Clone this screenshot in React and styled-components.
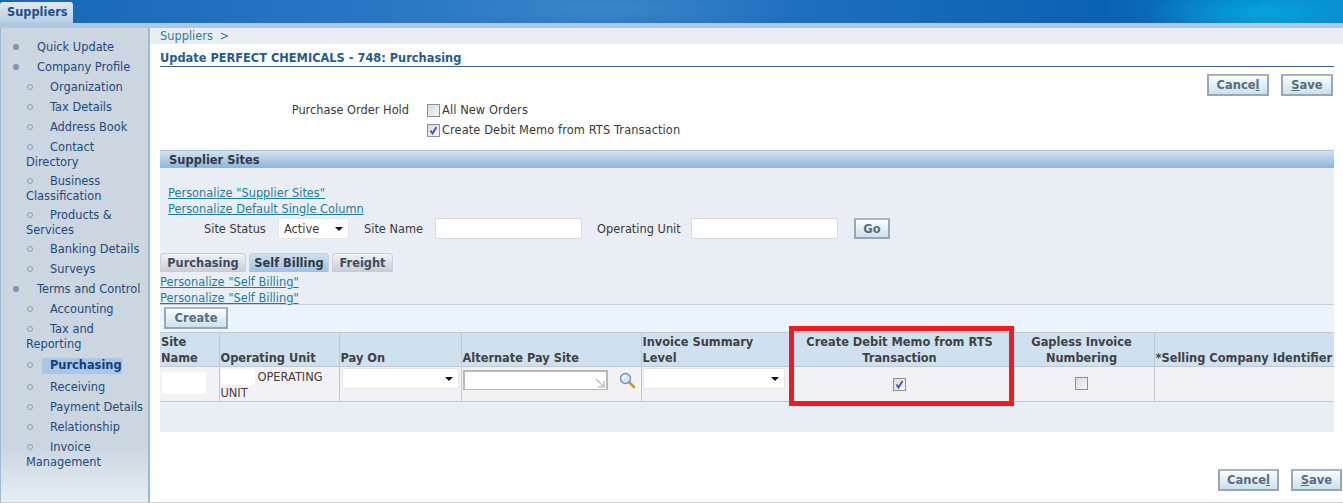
import React from "react";
import styled, { createGlobalStyle } from "styled-components";

const GlobalStyle = createGlobalStyle`
  html, body { margin: 0; padding: 0; background: #fff; }
  body {
    font-family: "DejaVu Sans", Tahoma, sans-serif;
    font-size: 11.4px;
    line-height: 15px;
    color: #3a3a3a;
  }
`;

const Page = styled.div`
  width: 1343px;
  height: 503px;
  display: flex;
  flex-direction: column;
  overflow: hidden;
  position: relative;
`;

const Banner = styled.div`
  height: 23px;
  flex: none;
  display: flex;
  align-items: flex-end;
  background:
    radial-gradient(ellipse 120px 30px at 1265px 12px, #04a4dc 0%, rgba(4, 164, 220, 0) 100%),
    radial-gradient(ellipse 200px 30px at 600px 8px, #3d86c9 0%, rgba(61, 134, 201, 0) 100%),
    linear-gradient(90deg, #1667b8 0%, #2a78c4 30%, #1d6fbe 60%, #0b61b4 82%, #0a87cf 100%);
`;

const BannerTab = styled.div`
  width: 73px;
  height: 21px;
  box-sizing: border-box;
  padding: 3px 0 0 7px;
  font-weight: bold;
  font-size: 11.4px;
  color: #1f4f86;
  border-radius: 3px 3px 0 0;
  background: linear-gradient(180deg, #dfe9f4 0%, #b5cde4 100%);
`;

const Strip = styled.div`
  height: 5px;
  flex: none;
  background: #afc8e0;
`;

const Body = styled.div`
  flex: 1;
  display: flex;
  min-height: 0;
`;

const Sidebar = styled.nav`
  width: 150px;
  flex: none;
  box-sizing: border-box;
  padding-top: 12px;
  border-left: 1px solid #9db9d6;
  border-right: 2px solid #9db9d6;
  background: linear-gradient(180deg, #cbd6e0 0%, #cbd6e0 88%, #e6eef6 100%);
  color: #1d4a7f;
`;

const NavItem = styled.div`
  margin-bottom: ${(p) => p.$mb || "5px"};
  padding-left: ${(p) => (p.$sub ? "25px" : "12px")};
`;

const Bullet = styled.span`
  display: inline-block;
  box-sizing: border-box;
  width: 6px;
  height: 6px;
  margin: 0 ${(p) => (p.$sub ? "17px" : "18px")} 0 ${(p) => (p.$sub ? "1px" : "0")};
  vertical-align: 1px;
  border-radius: 50%;
  background: ${(p) => (p.$sub ? "transparent" : "#7f96b2")};
  border: ${(p) => (p.$sub ? "1px solid #8a9db5" : "none")};
`;

const Current = styled.span`
  display: inline-block;
  margin-left: -8px;
  padding: 0 0 1px 8px;
  font-weight: bold;
  background: #a9c6e4;
  color: #123f78;
`;

const Main = styled.main`
  flex: 1;
  min-width: 0;
`;

const Crumbs = styled.div`
  height: 16px;
  box-sizing: border-box;
  padding: 1px 0 0 10px;
  background: #e9eef5;
  color: #2e7d98;
  word-spacing: 3px;
`;

const Title = styled.h1`
  margin: 7px 9px 0 10px;
  height: 16px;
  box-sizing: border-box;
  font-size: 11.4px;
  line-height: 15px;
  font-weight: bold;
  color: #2a5a8c;
  border-bottom: 1px solid #3a5f8c;
`;

const ButtonRow = styled.div`
  display: flex;
  justify-content: flex-end;
  gap: 12px;
  padding-right: ${(p) => (p.$flush ? "1px" : "10px")};
  margin-top: ${(p) => p.$top};
`;

const Button = styled.button`
  height: 22px;
  width: ${(p) => p.$w};
  padding: 0;
  box-sizing: border-box;
  font: bold 11.5px "DejaVu Sans", Tahoma, sans-serif;
  color: #5a6a85;
  border: 2px solid #9aa5b8;
  border-top-color: #a8b2c2;
  background: linear-gradient(180deg, #fbfdfd 0%, #c9e2ea 100%);
`;

const HoldForm = styled.div`
  display: grid;
  grid-template-columns: 259px auto;
  column-gap: 18px;
  margin: 7px 0 0 0;
  height: 41px;
  box-sizing: border-box;
`;

const HoldLabel = styled.div`
  text-align: right;
`;

const Checks = styled.div`
  display: flex;
  flex-direction: column;
  gap: 5px;
  letter-spacing: 0.1px;
`;

const CheckLine = styled.label`
  display: flex;
  align-items: center;
  gap: 2px;
`;

const Box = styled.span`
  display: inline-flex;
  width: 13px;
  height: 13px;
  flex: none;
  box-sizing: border-box;
  align-items: center;
  justify-content: center;
  border: 1px solid #8c9099;
  background: linear-gradient(135deg, #d9dbe0 0%, #f5f5f7 100%);
`;

const Check = ({ on }) => (
  <Box>
    {on && (
      <svg width="11" height="11" viewBox="0 0 11 11">
        <path d="M2.5 5.5 L4.5 8.5 L8.5 2" fill="none" stroke="#46569c" strokeWidth="1.8" />
      </svg>
    )}
  </Box>
);

const SectionBar = styled.h2`
  margin: 6px 9px 0 10px;
  height: 18px;
  box-sizing: border-box;
  padding: 2px 0 0 9px;
  font-size: 11.5px;
  line-height: 15px;
  font-weight: bold;
  color: #33393f;
  border-top: 1px solid #a9c2da;
  background: linear-gradient(180deg, #d3e2f0 0%, #8db5da 100%);
`;

const Panel = styled.section`
  position: relative;
  margin: 0 9px 0 10px;
  height: 264px;
  box-sizing: border-box;
  padding-top: 18px;
  background: #e9eef5;
`;

const LinkStack = styled.div`
  padding-left: ${(p) => p.$left};
  display: flex;
  flex-direction: column;
  align-items: flex-start;
  margin-top: ${(p) => p.$top || "0"};
  height: ${(p) => p.$h};
`;

const PLink = styled.a`
  height: 16px;
  flex: none;
  color: #1f7d9c;
  text-decoration: underline;
`;

const Filters = styled.div`
  display: flex;
  align-items: center;
  height: 23px;
  padding-left: 44px;
`;

const FilterLabel = styled.span`
  width: ${(p) => p.$w};
  flex: none;
  padding-top: 1px;
  white-space: nowrap;
  margin-right: 12px;
`;

const Dropdown = styled.div`
  display: flex;
  align-items: center;
  justify-content: space-between;
  box-sizing: border-box;
  width: ${(p) => p.$w};
  height: 21px;
  padding: 1px 5px 0;
  margin-right: ${(p) => p.$gap || "0"};
  background: #fff;
  border-radius: 2px;
  border: 1px solid #e3e6ea;
`;

const Caret = styled.span`
  width: 0;
  height: 0;
  border-left: 4px solid transparent;
  border-right: 4px solid transparent;
  border-top: 4px solid #111;
`;

const TextInput = styled.div`
  box-sizing: border-box;
  width: 147px;
  height: 21px;
  margin-right: ${(p) => p.$gap || "0"};
  background: #fff;
  border: 1px solid #d4d8de;
  border-radius: 2px;
`;

const GoButton = styled(Button)`
  margin-left: 16px;
  width: 36px;
  height: 21px;
`;

const Tabs = styled.div`
  display: flex;
  gap: 3px;
  margin-top: 13px;
`;

const Tab = styled.div`
  height: 19px;
  box-sizing: border-box;
  width: ${(p) => p.$w};
  padding-top: 2px;
  text-align: center;
  font-size: 11.4px;
  font-weight: bold;
  color: ${(p) => (p.$on ? "#33393f" : "#3f4d63")};
  border: 1px solid #c8d0da;
  border-bottom: none;
  border-radius: 4px 4px 0 0;
  background: ${(p) =>
    p.$on
      ? "linear-gradient(180deg, #cfe0f0 0%, #9fc2e2 100%)"
      : "linear-gradient(180deg, #f0f2f5 0%, #c8ccd2 100%)"};
`;

const Toolbar = styled.div`
  height: 28px;
  box-sizing: border-box;
  padding: 2px 0 0 4px;
  background: #ebf3fd;
  border-top: 1px solid #c8ccd3;
`;

const CreateButton = styled(Button)`
  width: 64px;
  height: 22px;
`;

const Grid = styled.table`
  width: 1174px;
  table-layout: fixed;
  border-collapse: collapse;
`;

const Head = styled.th`
  height: 33px;
  box-sizing: border-box;
  padding: 1px 1px 0;
  font-size: 11.4px;
  line-height: 16px;
  vertical-align: bottom;
  text-align: ${(p) => (p.$center ? "center" : "left")};
  white-space: ${(p) => (p.$single ? "nowrap" : "normal")};
  color: #3f4144;
  background: #cfe0f0;
  border: 1px solid #c3c8d0;
  border-left-width: ${(p) => (p.$first ? "0" : "1px")};
  border-right-width: ${(p) => (p.$last ? "0" : "1px")};
`;

const Cell = styled.td`
  height: 35px;
  box-sizing: border-box;
  padding: ${(p) => p.$pad || "0 1px"};
  vertical-align: ${(p) => (p.$top ? "top" : "middle")};
  text-align: ${(p) => (p.$center ? "center" : "left")};
  background: #f2f2f4;
  border: 1px solid #c3c8d0;
  border-left-width: ${(p) => (p.$first ? "0" : "1px")};
  border-right-width: ${(p) => (p.$last ? "0" : "1px")};
`;

const Redacted = styled.span`
  display: ${(p) => (p.$inline ? "inline-block" : "block")};
  width: ${(p) => p.$w};
  height: ${(p) => p.$h};
  margin-right: ${(p) => (p.$inline ? "3px" : "0")};
  vertical-align: top;
  background: #fff;
  border-radius: 3px;
`;

const UnitText = styled.div`
  line-height: 16px;
  padding: 2px 0 0 0;
  color: #4a3a3a;
`;

const LovRow = styled.div`
  display: flex;
  align-items: center;
  gap: 11px;
`;

const LovInput = styled.div`
  position: relative;
  width: 145px;
  height: 20px;
  box-sizing: border-box;
  background: #fff;
  border: 2px solid #b4b7bc;
  border-bottom-width: 1px;
`;

const Resize = styled.svg`
  position: absolute;
  right: 1px;
  bottom: 1px;
`;

const Highlight = styled.div`
  position: absolute;
  left: 629px;
  top: 158px;
  width: 225px;
  height: 80px;
  box-sizing: border-box;
  border: 5px solid #ed1c24;
  pointer-events: none;
`;

const BottomLine = styled.div`
  position: absolute;
  left: 0;
  right: 0;
  bottom: 0;
  height: 1px;
  background: #d0d0d0;
`;

const Magnifier = () => (
  <svg width="17" height="17" viewBox="0 0 17 17">
    <path d="M10 10 L15 15" stroke="#b8a030" strokeWidth="2.6" strokeLinecap="round" />
    <circle cx="6.5" cy="6.5" r="5" fill="#d6e8f8" stroke="#6d93bc" strokeWidth="1.4" />
    <path d="M3.8 6.5 A3 3 0 0 1 6.5 3.6" fill="none" stroke="#fff" strokeWidth="1.2" />
  </svg>
);

const nav = [
  { label: "Quick Update" },
  { label: "Company Profile" },
  { label: "Organization", sub: true },
  { label: "Tax Details", sub: true },
  { label: "Address Book", sub: true },
  { label: "Contact Directory", sub: true, mb: "4px" },
  { label: "Business Classification", sub: true, mb: "4px" },
  { label: "Products & Services", sub: true, mb: "4px" },
  { label: "Banking Details", sub: true },
  { label: "Surveys", sub: true },
  { label: "Terms and Control" },
  { label: "Accounting", sub: true },
  { label: "Tax and Reporting", sub: true, mb: "6px" },
  { label: "Purchasing", sub: true, current: true, mb: "6px" },
  { label: "Receiving", sub: true },
  { label: "Payment Details", sub: true },
  { label: "Relationship", sub: true },
  { label: "Invoice Management", sub: true },
];

const App = () => (
  <Page>
    <GlobalStyle />
    <Banner>
      <BannerTab>Suppliers</BannerTab>
    </Banner>
    <Strip />
    <Body>
      <Sidebar>
        {nav.map((item) => (
          <NavItem key={item.label} $sub={item.sub} $mb={item.mb}>
            <Bullet $sub={item.sub} />
            {item.current ? <Current>{item.label}</Current> : item.label}
          </NavItem>
        ))}
      </Sidebar>
      <Main>
        <Crumbs>Suppliers &gt;</Crumbs>
        <Title>Update PERFECT CHEMICALS - 748: Purchasing</Title>
        <ButtonRow $top="7px">
          <Button $w="62px">Cance<u>l</u></Button>
          <Button $w="52px"><u>S</u>ave</Button>
        </ButtonRow>
        <HoldForm>
          <HoldLabel>Purchase Order Hold</HoldLabel>
          <Checks>
            <CheckLine><Check />All New Orders</CheckLine>
            <CheckLine><Check on />Create Debit Memo from RTS Transaction</CheckLine>
          </Checks>
        </HoldForm>
        <SectionBar>Supplier Sites</SectionBar>
        <Panel>
          <LinkStack $left="8px" $h="31px">
            <PLink>Personalize "Supplier Sites"</PLink>
            <PLink>Personalize Default Single Column</PLink>
          </LinkStack>
          <Filters>
            <FilterLabel $w="62px">Site Status</FilterLabel>
            <Dropdown $w="71px" $gap="15px">Active<Caret /></Dropdown>
            <FilterLabel $w="59px">Site Name</FilterLabel>
            <TextInput $gap="15px" />
            <FilterLabel $w="82px">Operating Unit</FilterLabel>
            <TextInput />
            <GoButton>Go</GoButton>
          </Filters>
          <Tabs>
            <Tab $w="86px">Purchasing</Tab>
            <Tab $w="80px" $on>Self Billing</Tab>
            <Tab $w="61px">Freight</Tab>
          </Tabs>
          <LinkStack $left="0" $top="3px" $h="29px">
            <PLink>Personalize "Self Billing"</PLink>
            <PLink>Personalize "Self Billing"</PLink>
          </LinkStack>
          <Toolbar>
            <CreateButton>Create</CreateButton>
          </Toolbar>
          <Grid>
            <colgroup>
              <col style={{ width: 59 }} />
              <col style={{ width: 120 }} />
              <col style={{ width: 122 }} />
              <col style={{ width: 180 }} />
              <col style={{ width: 149 }} />
              <col style={{ width: 219 }} />
              <col style={{ width: 145 }} />
              <col style={{ width: 180 }} />
            </colgroup>
            <thead>
              <tr>
                <Head $first>Site Name</Head>
                <Head>Operating Unit</Head>
                <Head>Pay On</Head>
                <Head>Alternate Pay Site</Head>
                <Head>Invoice Summary Level</Head>
                <Head $center>Create Debit Memo from RTS Transaction</Head>
                <Head $center>Gapless Invoice Numbering</Head>
                <Head $last $single>*Selling Company Identifier</Head>
              </tr>
            </thead>
            <tbody>
              <tr>
                <Cell $first $top $pad="5px 1px 0 2px"><Redacted $w="44px" $h="22px" /></Cell>
                <Cell $top $pad="0 1px">
                  <UnitText><Redacted $inline $w="34px" $h="16px" />OPERATING UNIT</UnitText>
                </Cell>
                <Cell $top $pad="1px 1px 0 2px"><Dropdown $w="117px"><span /><Caret /></Dropdown></Cell>
                <Cell $top $pad="3px 1px 0">
                  <LovRow>
                    <LovInput>
                      <Resize width="10" height="10" viewBox="0 0 10 10">
                        <path d="M1 1 L8 8 M3 9 H9 V3" fill="none" stroke="#c4c4c4" strokeWidth="1.6" />
                      </Resize>
                    </LovInput>
                    <Magnifier />
                  </LovRow>
                </Cell>
                <Cell $top $pad="1px 1px 0"><Dropdown $w="142px"><span /><Caret /></Dropdown></Cell>
                <Cell $center $pad="3px 1px 0"><Check on /></Cell>
                <Cell $center $pad="3px 1px 0"><Check /></Cell>
                <Cell $last />
              </tr>
            </tbody>
          </Grid>
          <Highlight />
        </Panel>
        <ButtonRow $flush $top="37px">
          <Button $w="61px">Cance<u>l</u></Button>
          <Button $w="51px"><u>S</u>ave</Button>
        </ButtonRow>
      </Main>
    </Body>
    <BottomLine />
  </Page>
);

export default App;
